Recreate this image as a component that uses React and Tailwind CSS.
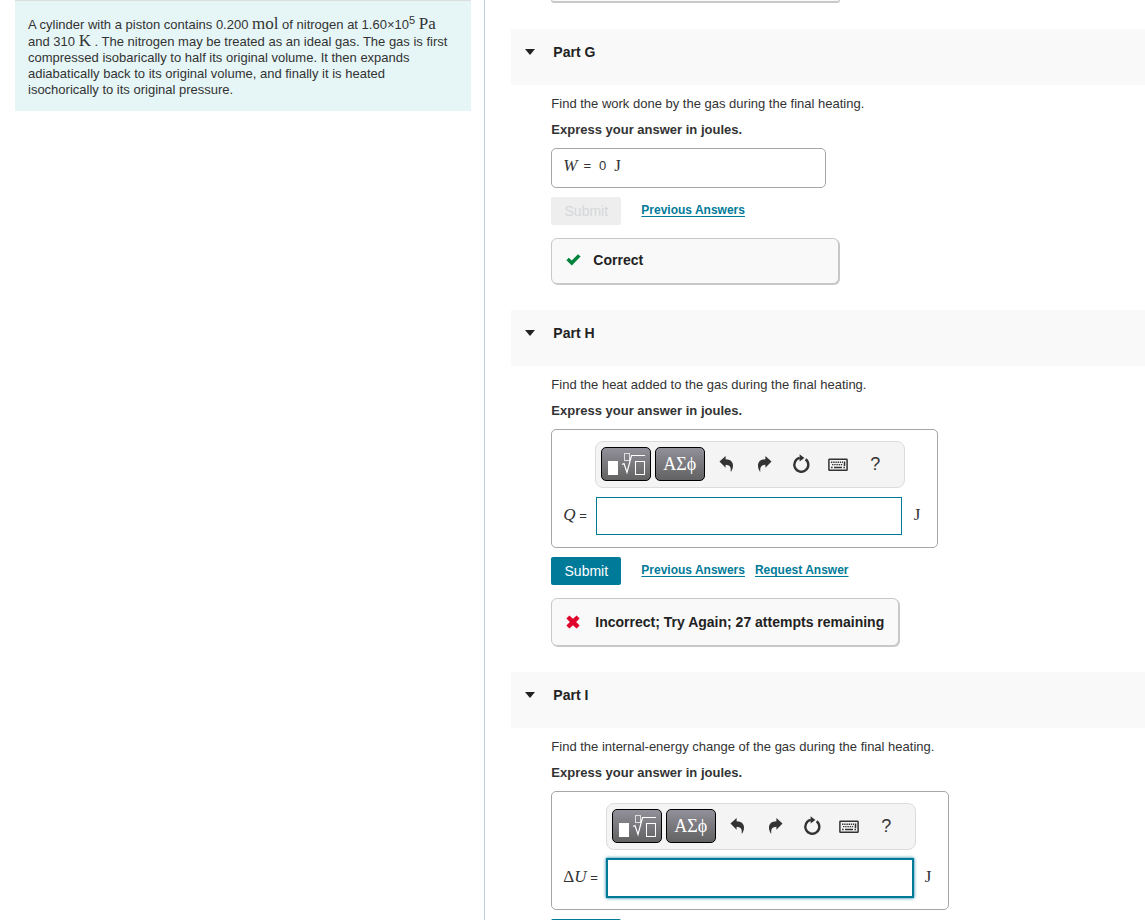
import { useState } from "react";
import clsx from "clsx";

const CheckIcon = () => (
  <svg viewBox="0 0 16 12" className="h-3 w-4" fill="#00843d" aria-hidden="true">
    <path d="M0.4 6.2 2.8 3.7 5.7 6.4 12 0.2 14.6 2.6 5.8 11.4z" />
  </svg>
);

const CrossIcon = () => (
  <svg viewBox="0 0 14 14" className="h-3.5 w-3.5" fill="#e0052d" aria-hidden="true">
    <path d="M3.4 0.4 7 3.8 10.6 0.4 13.6 3.4 10.1 7 13.6 10.6 10.6 13.6 7 10.2 3.4 13.6 0.4 10.6 3.9 7 0.4 3.4z" />
  </svg>
);

const UndoIcon = () => (
  <svg viewBox="0 0 16 16" className="h-4 w-4" fill="#333" aria-hidden="true">
    <path d="M0.5 5.5 6.6 0v3.2c4.8.2 7.4 2.6 7.4 6.4 0 2.4-.7 4.4-2 6.2-.3 0-.4-.2-.3-.5.5-4.6-1.2-6.3-5.1-6.5v3z" />
  </svg>
);

const RedoIcon = () => (
  <svg viewBox="0 0 16 16" className="h-4 w-4" fill="#333" aria-hidden="true">
    <path d="M15.5 5.5 9.4 0v3.2c-4.8.2-7.4 2.6-7.4 6.4 0 2.4.7 4.4 2 6.2.3 0 .4-.2.3-.5-.5-4.6 1.2-6.3 5.1-6.5v3z" />
  </svg>
);

const ResetIcon = () => (
  <svg viewBox="0 0 18 20" className="h-5 w-[18px]" aria-hidden="true">
    <path d="M13.6 5.2A7 7 0 1 1 7.8 3.9" fill="none" stroke="#333" strokeWidth="2.4" />
    <path d="M7.6 0.2 12.4 3.9 7.6 7.4z" fill="#333" />
  </svg>
);

const KeyboardIcon = () => (
  <svg viewBox="0 0 20 15" className="h-[15px] w-5" fill="none" stroke="#333" aria-hidden="true">
    <rect x="0.9" y="3.3" width="18.2" height="11" rx="0.6" strokeWidth="1.5" />
    <path d="M3 6.2h12M4 8.6h11" strokeWidth="1.4" strokeDasharray="1.4 0.8" />
    <path d="M3 11.4h1.6M6 11.4h8M15.4 11.4H17M16.5 5.5v4.6" strokeWidth="1.5" />
  </svg>
);

const TemplatesIcon = () => (
  <svg viewBox="0 0 40 24" className="h-6 w-10" fill="none" stroke="#fff" aria-hidden="true">
    <rect x="2" y="9" width="10" height="14" fill="#fff" stroke="none" />
    <rect x="18.5" y="1.5" width="5" height="7" stroke="#ddd" />
    <path d="M16 12.5 18 11.5 21 20.5 25.5 3.5H39" strokeWidth="1.2" />
    <rect x="29.5" y="9.5" width="9" height="13" />
  </svg>
);

const TOOLS = [
  { name: "undo", icon: <UndoIcon /> },
  { name: "redo", icon: <RedoIcon /> },
  { name: "reset", icon: <ResetIcon /> },
  { name: "keyboard shortcuts", icon: <KeyboardIcon /> },
  { name: "help", icon: <span className="text-lg leading-5">?</span> },
];

const Serif = ({ children, italic }) => (
  <span
    className={clsx(
      "font-['Liberation_Serif',serif] text-[17px] leading-4",
      italic && "italic"
    )}
  >
    {children}
  </span>
);

const darkButton =
  "flex h-[34px] w-[50px] items-center justify-center rounded-[5px] border border-black bg-linear-to-b from-[#92909a] to-[#626262] text-white";

const Toolbar = () => (
  <div className="flex h-[47px] items-center rounded-lg border border-[#dcdcdc] bg-[#f4f4f4] px-[5px] pb-0.5">
    <button type="button" aria-label="Templates" className={darkButton}>
      <TemplatesIcon />
    </button>
    <button
      type="button"
      className={clsx(
        darkButton,
        "mx-1 font-['Liberation_Serif',serif] text-lg"
      )}
    >
      ΑΣϕ
    </button>
    {TOOLS.map(({ name, icon }) => (
      <button
        key={name}
        type="button"
        aria-label={name}
        className="flex h-8 w-[37px] items-center justify-center text-[#333]"
      >
        {icon}
      </button>
    ))}
  </div>
);

const AnswerEditor = ({ id, label, focused }) => {
  const [value, setValue] = useState("");

  return (
    <div className="grid w-fit grid-cols-[auto_310px_auto] items-center gap-y-[9px] rounded-[5px] border border-[#a6a6a6] pt-[11px] pr-[17px] pb-3 pl-[11px]">
      <div className="col-start-2">
        <Toolbar />
      </div>
      <label htmlFor={id} className="col-start-1 pr-2 whitespace-nowrap">
        {label} =
      </label>
      <input
        id={id}
        type="text"
        value={value}
        onChange={(e) => setValue(e.target.value)}
        className={clsx(
          "mr-[3px] ml-px h-[38px] border border-[#007a99] px-2 outline-none",
          focused && "shadow-[0_0_0_1px_#007a99,0_0_3px_1px_#007a99]"
        )}
      />
      <span className="pl-[9px]">
        <Serif>J</Serif>
      </span>
    </div>
  );
};

const Actions = ({ disabled, links }) => (
  <div className="mt-[9px] flex h-7 items-center gap-5">
    <button
      type="button"
      disabled={disabled}
      className="h-7 w-[70px] rounded-xs bg-[#007a99] text-sm text-white disabled:bg-[#eee] disabled:text-[#d5d8da]"
    >
      Submit
    </button>
    <div className="flex gap-2.5 pb-0.5">
      {links.map((link) => (
        <a
          key={link}
          href="#"
          className="text-xs font-bold text-[#007a99] underline underline-offset-2"
        >
          {link}
        </a>
      ))}
    </div>
  </div>
);

const Feedback = ({ icon, children, className }) => (
  <div
    className={clsx(
      "mt-[13px] flex w-fit items-center rounded-md border border-[#c8c8c8] bg-[#f9f9f9] px-3.5 text-sm font-bold text-[#222] shadow-[1px_1px_0_#c8c8c8]",
      className
    )}
  >
    {icon}
    {children}
  </div>
);

const Part = ({ title, question, children }) => (
  <section className="pb-[26px]">
    <header className="flex h-14 items-start bg-[#f9f9f9] pt-3.5 pl-3.5">
      <button
        type="button"
        aria-expanded="true"
        className="flex items-center gap-[18px] text-sm leading-[18px] font-bold text-[#222]"
      >
        <svg viewBox="0 0 10 6" className="h-1.5 w-2.5" fill="#222" aria-hidden="true">
          <path d="M0 0H10L5 6z" />
        </svg>
        {title}
      </button>
    </header>
    <div className="pt-[9px] pl-10">
      <p className="leading-5">{question}</p>
      <p className="mt-1.5 mb-2 leading-5 font-bold">
        Express your answer in joules.
      </p>
      {children}
    </div>
  </section>
);

const App = () => {
  return (
    <main className="flex h-screen overflow-hidden bg-white font-['Liberation_Sans',Arial,sans-serif] text-[13px] text-[#333]">
      <aside className="w-[42.3%] shrink-0 pr-[13px] pl-[15px]">
        <div className="border-t border-[#ddd] bg-[#e6f6f6] px-[13px] pt-[15px] pb-[13px] leading-4">
          A cylinder with a piston contains 0.200 <Serif>mol</Serif> of nitrogen
          at 1.60×10
          <sup className="text-[11px]">5</sup> <Serif>Pa</Serif> and 310{" "}
          <Serif>K</Serif> . The nitrogen may be treated as an ideal gas. The
          gas is first compressed isobarically to half its original volume. It
          then expands adiabatically back to its original volume, and finally it
          is heated isochorically to its original pressure.
        </div>
      </aside>

      <div className="min-w-0 flex-1 overflow-hidden border-l border-[#b9cfdd] pl-[26px]">
        <div className="mb-[26px] ml-10 h-[3px] w-[289px] rounded-b-md border border-t-0 border-b-2 border-[#c8c8c8] bg-[#f9f9f9]" />

        <Part
          title="Part G"
          question="Find the work done by the gas during the final heating."
        >
          <div className="flex h-10 w-[275px] items-center gap-2 rounded-[5px] border border-[#a6a6a6] px-[11px] pb-1">
            <span className="flex items-center gap-1.5">
              <Serif italic>W</Serif> =
            </span>
            <span>0</span>
            <Serif>J</Serif>
          </div>
          <Actions disabled links={["Previous Answers"]} />
          <Feedback
            icon={<CheckIcon />}
            className="h-[46px] min-w-72 gap-[11px] pb-0.5"
          >
            Correct
          </Feedback>
        </Part>

        <Part
          title="Part H"
          question="Find the heat added to the gas during the final heating."
        >
          <AnswerEditor id="heat" label={<Serif italic>Q</Serif>} />
          <Actions links={["Previous Answers", "Request Answer"]} />
          <Feedback icon={<CrossIcon />} className="h-12 gap-[15px]">
            Incorrect; Try Again; 27 attempts remaining
          </Feedback>
        </Part>

        <Part
          title="Part I"
          question="Find the internal-energy change of the gas during the final heating."
        >
          <AnswerEditor
            id="energy"
            label={
              <>
                <Serif>Δ</Serif>
                <Serif italic>U</Serif>
              </>
            }
            focused
          />
          <Actions links={["Previous Answers", "Request Answer"]} />
        </Part>
      </div>
    </main>
  );
};

export default App;
